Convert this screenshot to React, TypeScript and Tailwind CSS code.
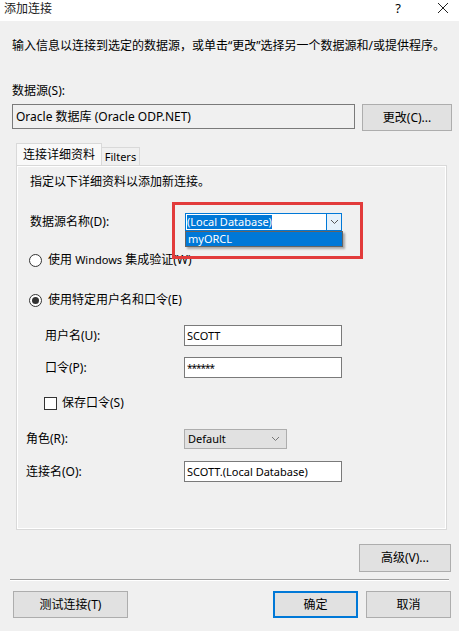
export default function App() {
  return (
    <div className="relative h-[631px] w-[459px] overflow-hidden bg-[#f0f0f0] font-['Segoe_UI','Noto_Sans','Noto_Sans_CJK_SC',sans-serif] text-[12px] leading-[16px] text-black">
      {/* title bar */}
      <div className="flex h-[21px] items-start justify-between bg-white pl-[4px]">
        <span className="leading-[17px] text-[#1a1a1a]">添加连接</span>
        <div className="flex items-start gap-[36px] pr-[10px]">
          <span className="text-[13px] leading-[17px]">?</span>
          <svg width="12" height="14" viewBox="0 0 12 14" className="mt-[2px]">
            <path d="M1 1 L11 11 M11 1 L1 11" stroke="#222" strokeWidth="1" fill="none" />
          </svg>
        </div>
      </div>

      <p className="mt-[17px] pl-[12px] whitespace-nowrap">
        输入信息以连接到选定的数据源，或单击“更改”选择另一个数据源和/或提供程序。
      </p>

      <p className="mt-[29px] pl-[12px]">数据源(S):</p>
      <div className="mt-[5px] flex items-start gap-[7px] pl-[12px]">
        <div className="flex h-[25px] w-[343px] items-center border border-[#7a7a7a] px-[3px]">
          Oracle 数据库 (Oracle ODP.NET)
        </div>
        <button className="h-[27px] w-[90px] border border-[#adadad] bg-[#e1e1e1]">更改(C)...</button>
      </div>

      {/* tabs */}
      <div className="ml-[16px] mt-[12px] flex h-[22px] items-end">
        <div className="flex h-[22px] w-[86px] items-center justify-center border border-b-0 border-[#d9d9d9] bg-[#f9f9f9]">
          连接详细资料
        </div>
        <div className="flex h-[18px] w-[38px] items-center justify-center border border-b-0 border-l-0 border-[#d9d9d9] text-[11px]">
          Filters
        </div>
      </div>

      <div className="relative ml-[16px] h-[365px] w-[431px] border border-[#d9d9d9]">
        <div className="h-full w-full border border-white">
          <p className="mt-[7px] pl-[12px]">指定以下详细资料以添加新连接。</p>

          <div className="mt-[23px] flex h-[18px] items-center pl-[12px]">
            <span className="w-[155px]">数据源名称(D):</span>
            <div className="flex h-[18px] w-[157px] items-stretch border border-[#0078d7] bg-white">
              <div className="flex flex-1 items-center pl-[1px]">
                <span className="bg-[#0078d7] text-[11px] leading-[14px] text-white">(Local Database)</span>
              </div>
              <div className="flex w-[15px] items-center justify-center border-l border-[#0078d7] bg-[#e5f1fb]">
                <svg width="9" height="6" viewBox="0 0 9 6">
                  <path d="M1 1 L4.5 4.5 L8 1" stroke="#555" strokeWidth="1" fill="none" />
                </svg>
              </div>
            </div>
          </div>

          <div className="mt-[21px] flex h-[16px] items-center gap-[6px] pl-[11px]">
            <span className="h-[13px] w-[13px] rounded-full border border-[#333] bg-white" />
            <span>
              使用 <span className="text-[11px]">Windows</span> 集成验证(W)
            </span>
          </div>

          <div className="mt-[24px] flex h-[16px] items-center gap-[6px] pl-[11px]">
            <span className="flex h-[13px] w-[13px] items-center justify-center rounded-full border border-[#333] bg-white">
              <span className="h-[7px] w-[7px] rounded-full bg-[#333]" />
            </span>
            <span>使用特定用户名和口令(E)</span>
          </div>

          <div className="mt-[17px] flex h-[21px] items-center pl-[27px]">
            <span className="w-[139px]">用户名(U):</span>
            <div className="flex h-[21px] w-[158px] items-center border border-[#7a7a7a] bg-white px-[2px] text-[11px]">
              SCOTT
            </div>
          </div>
          <div className="mt-[11px] flex h-[21px] items-center pl-[27px]">
            <span className="w-[139px]">口令(P):</span>
            <div className="flex h-[21px] w-[158px] items-center border border-[#7a7a7a] bg-white px-[2px] text-[10px] tracking-[-1px]">
              ******
            </div>
          </div>

          <div className="mt-[17px] flex h-[16px] items-center gap-[5px] pl-[26px]">
            <span className="h-[13px] w-[13px] border border-[#333] bg-white" />
            <span>保存口令(S)</span>
          </div>

          <div className="mt-[18px] flex h-[20px] items-center pl-[8px]">
            <span className="w-[158px]">角色(R):</span>
            <div className="flex h-[20px] w-[103px] items-center justify-between border border-[#adadad] bg-[#e1e1e1] pl-[3px] pr-[6px] text-[11px]">
              <span>Default</span>
              <svg width="9" height="6" viewBox="0 0 9 6">
                <path d="M1 1 L4.5 4.5 L8 1" stroke="#777" strokeWidth="1" fill="none" />
              </svg>
            </div>
          </div>
          <div className="mt-[12px] flex h-[21px] items-center pl-[8px]">
            <span className="w-[158px]">连接名(O):</span>
            <div className="flex h-[21px] w-[158px] items-center border border-[#7a7a7a] bg-white px-[2px] text-[11px]">
              SCOTT.(Local Database)
            </div>
          </div>
        </div>

        {/* dropdown list */}
        <div className="absolute left-[168px] top-[65px] h-[16px] w-[158px] border border-[#646464] bg-[#0078d7] pl-[2px] text-[11px] leading-[14px] text-white shadow-[2px_2px_2px_rgba(0,0,0,0.3)]">
          myORCL
        </div>

        {/* annotation */}
        <div className="absolute left-[155px] top-[36px] h-[57px] w-[191px] border-[3px] border-[#e23b3b]" />
      </div>

      <div className="mt-[14px] flex justify-end pr-[8px]">
        <button className="h-[28px] w-[92px] border border-[#adadad] bg-[#e1e1e1]">高级(V)...</button>
      </div>

      <div className="mx-[10px] mt-[7px] h-[2px] border-t border-b border-t-[#a0a0a0] border-b-white" />

      <div className="mt-[10px] flex items-start pl-[13px] pr-[8px]">
        <button className="h-[27px] w-[115px] border border-[#adadad] bg-[#e1e1e1]">测试连接(T)</button>
        <button className="ml-auto h-[27px] w-[85px] border-2 border-[#0078d7] bg-[#e1e1e1]">确定</button>
        <button className="ml-[8px] h-[27px] w-[85px] border border-[#adadad] bg-[#e1e1e1]">取消</button>
      </div>
    </div>
  );
}
